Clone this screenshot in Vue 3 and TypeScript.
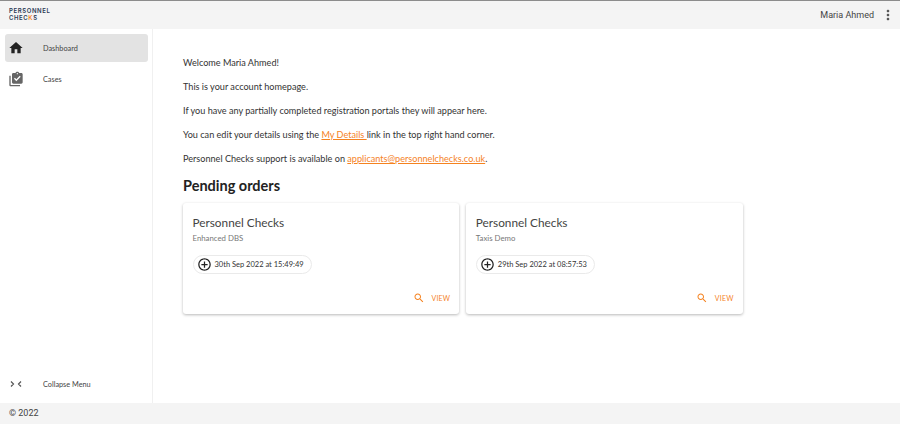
<script setup lang="ts">
interface Order { title: string; sub: string; date: string }
const orders: Order[] = [
  { title: 'Personnel Checks', sub: 'Enhanced DBS', date: '30th Sep 2022 at 15:49:49' },
  { title: 'Personnel Checks', sub: 'Taxis Demo', date: '29th Sep 2022 at 08:57:53' },
]
</script>

<template>
  <div class="page">
    <header class="top">
      <div class="logo">
        <div>PERSONNEL</div>
        <div>CHEC<span class="k">K</span>S</div>
      </div>
      <div class="user">
        <span>Maria Ahmed</span>
        <svg width="16" height="16" viewBox="0 0 24 24" fill="#555"><path d="M12 8c1.100 0 2-.9 2-2s-.9-2-2-2-2 .9-2 2 .9 2 2 2zm0 2c-1.100 0-2 .9-2 2s.9 2 2 2 2-.9 2-2-.9-2-2-2zm0 6c-1.100 0-2 .9-2 2s.9 2 2 2 2-.9 2-2-.9-2-2-2z"/></svg>
      </div>
    </header>
    <div class="mid">
      <aside class="side">
        <nav class="nav">
          <div class="item active">
            <svg width="16" height="16" viewBox="0 0 24 24" fill="#222"><path d="M10 20v-6h4v6h5v-8h3L12 3 2 12h3v8z"/></svg>
            <span>Dashboard</span>
          </div>
          <div class="item">
            <svg width="16" height="16" viewBox="0 0 24 24" fill="#666"><path d="M4 7H2v14c0 1.100.9 2 2 2h14v-2H4V7z"/><path fill-rule="evenodd" d="M20 3h-3.200C16.400 1.800 15.300 1 14 1s-2.400.8-2.800 2H8c-1.100 0-2 .9-2 2v12c0 1.100.9 2 2 2h12c1.100 0 2-.9 2-2V5c0-1.100-.9-2-2-2zm-6 0c.55 0 1 .45 1 1s-.45 1-1 1-1-.45-1-1 .45-1 1-1zm-1.500 12.200L9 11.700l1.400-1.400 2.100 2.100 5.100-5.100L19 8.700l-6.500 6.500z"/></svg>
            <span>Cases</span>
          </div>
        </nav>
        <div class="item collapse">
          <svg width="16" height="16" viewBox="0 0 16 16" fill="none" stroke="#555" stroke-width="1.200"><path d="M3 5.500 5.500 8 3 10.500M13 5.500 10.500 8l2.500 2.500"/></svg>
          <span>Collapse Menu</span>
        </div>
      </aside>
      <main class="main">
        <p>Welcome Maria Ahmed!</p>
        <p>This is your account homepage.</p>
        <p>If you have any partially completed registration portals they will appear here.</p>
        <p>You can edit your details using the <a>My Details </a>link in the top right hand corner.</p>
        <p>Personnel Checks support is available on <a>applicants@personnelchecks.co.uk</a>.</p>
        <h2>Pending orders</h2>
        <div class="cards">
          <section v-for="o in orders" :key="o.date" class="card">
            <h3>{{ o.title }}</h3>
            <div class="sub">{{ o.sub }}</div>
            <div class="chip">
              <svg width="15" height="15" viewBox="0 0 24 24" fill="#222"><path d="M13 7h-2v4H7v2h4v4h2v-4h4v-2h-4V7zm-1-5C6.480 2 2 6.480 2 12s4.480 10 10 10 10-4.480 10-10S17.520 2 12 2zm0 18c-4.410 0-8-3.590-8-8s3.590-8 8-8 8 3.590 8 8-3.590 8-8 8z"/></svg>
              <span>{{ o.date }}</span>
            </div>
            <div class="actions">
              <svg width="12" height="12" viewBox="0 0 24 24" fill="#f5821f"><path d="M15.500 14h-.79l-.28-.27C15.410 12.590 16 11.110 16 9.500 16 5.910 13.090 3 9.500 3S3 5.910 3 9.500 5.910 16 9.500 16c1.610 0 3.090-.59 4.230-1.570l.27.28v.79l5 4.990L20.490 19l-4.990-5zm-6 0C7.010 14 5 11.990 5 9.500S7.010 5 9.500 5 14 7.010 14 9.500 11.990 14 9.500 14z"/></svg>
              <span>VIEW</span>
            </div>
          </section>
        </div>
      </main>
    </div>
    <footer class="foot">© 2022</footer>
  </div>
</template>

<style>
html, body { margin: 0; background: #fff; }
</style>

<style scoped>
.page {
  width: 900px;
  height: 426px;
  display: flex;
  flex-direction: column;
  font-family: "Lato", "Noto Sans", sans-serif;
  color: #333;
  overflow: hidden;
}
.top {
  height: 28px;
  border-top: 1px solid #8c8c8c;
  background: #f4f4f4;
  display: flex;
  align-items: center;
  justify-content: space-between;
  padding: 0 4px 0 9px;
  flex: none;
}
.logo {
  font: 600 6px/7px "Inter", sans-serif;
  color: #2b3a55;
  letter-spacing: 0.6px;
  margin-top: -2px;
}
.k { color: #f5821f; }
.user {
  display: flex;
  align-items: center;
  gap: 6px;
  font: 400 9px "Roboto", sans-serif;
  color: #444;
}
.mid { flex: 1; display: flex; min-height: 0; }
.side {
  width: 152px;
  border-right: 1px solid #f0f0f0;
  display: flex;
  flex-direction: column;
  justify-content: space-between;
  padding: 5px 0 5px;
  flex: none;
}
.nav { display: flex; flex-direction: column; gap: 3px; }
.item {
  height: 28px;
  margin: 0 4px 0 5px;
  border-radius: 3px;
  display: flex;
  align-items: center;
  padding-left: 3px;
  gap: 19px;
  font-size: 7.300px;
  color: #444;
}
.active { background: #e3e3e3; }
.main { flex: 1; padding: 26px 0 0 30px; min-width: 0; }
p {
  margin: 0 0 9px;
  font-size: 9.120px;
  line-height: 15px;
  color: #333;
}
a { color: #f5821f; text-decoration: underline; }
h2 {
  margin: 10px 0 8px;
  font-size: 14.500px;
  line-height: 19px;
  font-weight: 700;
  color: #222;
}
.cards { display: flex; gap: 7px; }
.card {
  width: 276.300px;
  height: 111px;
  box-sizing: border-box;
  padding: 12px 9px 0 9.500px;
  border-radius: 3px;
  background: #fff;
  box-shadow: 0 1px 3px rgba(0,0,0,.28);
  display: flex;
  flex-direction: column;
  align-items: flex-start;
}
h3 {
  margin: 0;
  font-size: 11.800px;
  line-height: 16px;
  font-weight: 400;
  color: #444;
}
.sub { font-size: 7.800px; line-height: 11px; margin-top: 2px; color: #777; }
.chip {
  margin-top: 11px;
  height: 19px;
  box-sizing: border-box;
  border: 1px solid #eaeaea;
  border-radius: 10px;
  padding: 0 7px 0 3px;
  display: flex;
  align-items: center;
  gap: 3px;
  font-size: 7.500px;
  color: #333;
}
.actions {
  margin-top: auto;
  margin-bottom: 10px;
  align-self: flex-end;
  display: flex;
  align-items: center;
  gap: 7px;
  font-size: 7px;
  letter-spacing: 0.2px;
  color: #f5821f;
}
.foot {
  height: 21px;
  margin-bottom: 2px;
  background: #f4f4f4;
  flex: none;
  padding-left: 9px;
  font: 400 9px/21px "Roboto", sans-serif;
  color: #444;
}
</style>
